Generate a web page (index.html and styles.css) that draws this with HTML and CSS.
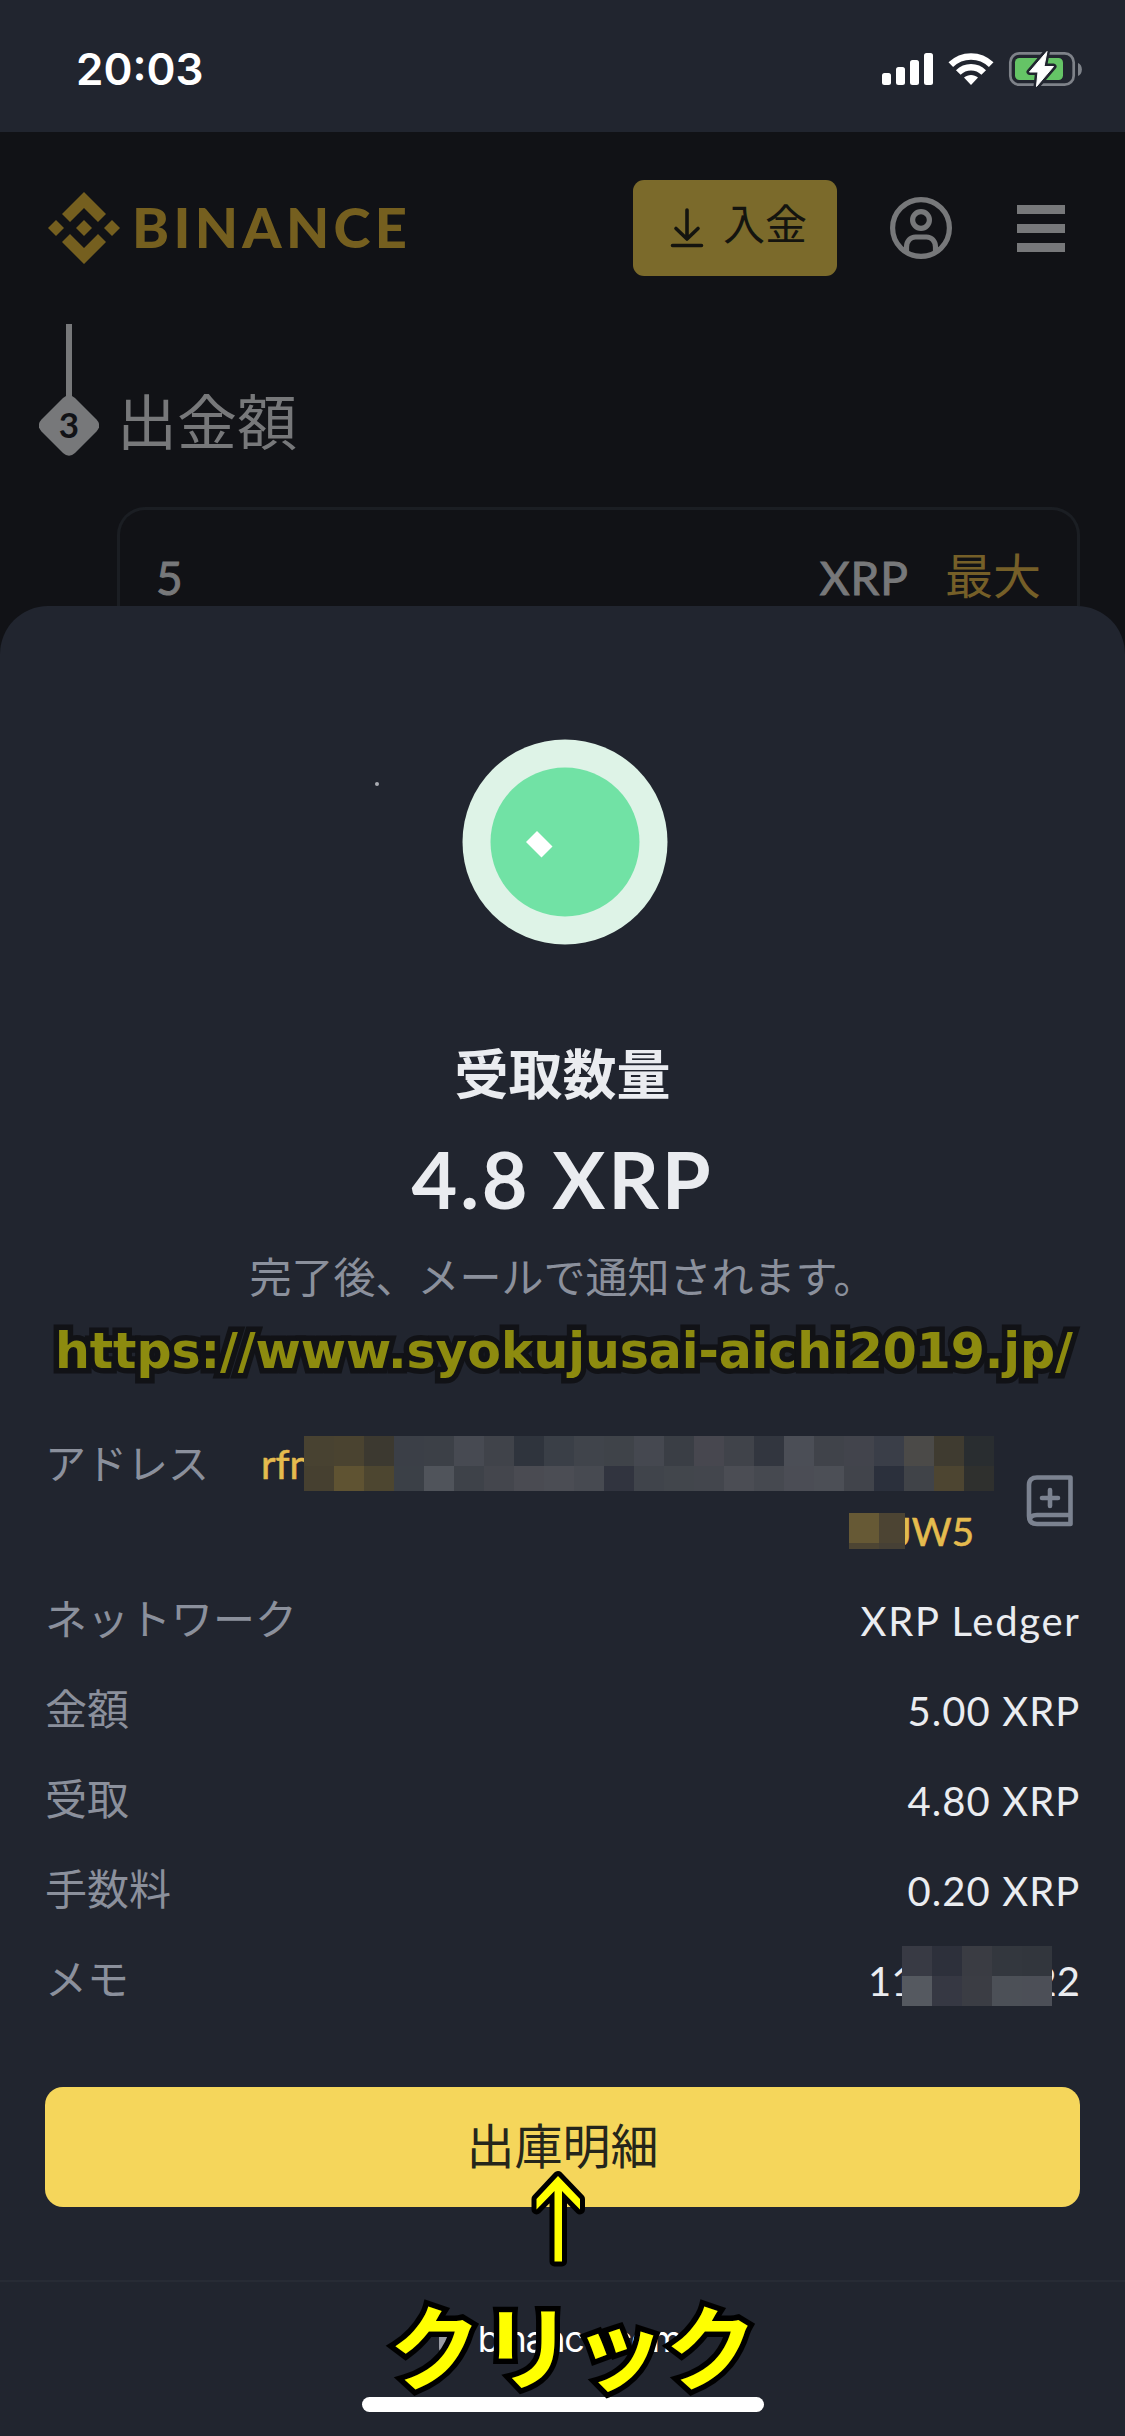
FILE: index.html
```html
<!DOCTYPE html>
<html lang="ja">
<head>
<meta charset="utf-8">
<title>出金</title>
<link rel="stylesheet" href="styles.css">
</head>
<body>
<div class="status">
  <span class="clock">20:03</span>
  <svg class="status-icons" width="202" height="36" viewBox="881 51 202 36">
    <g fill="#fff">
      <rect x="882" y="73" width="9" height="12" rx="2.5"/><rect x="896" y="67" width="9" height="18" rx="2.5"/><rect x="910" y="60" width="9" height="25" rx="2.5"/><rect x="924" y="53" width="9" height="32" rx="2.5"/>
      <path d="M971 85l-7-7.4c4-3.6 10-3.6 14 0z"/>
    </g>
    <path d="M958.3 72.5a18 18 0 0 1 25.4 0M950.8 64.7a29 29 0 0 1 40.4 0" fill="none" stroke="#fff" stroke-width="6.6"/>
    <rect x="1010.3" y="53.3" width="63.400" height="31.400" rx="9" fill="none" stroke="#7e8289" stroke-width="2.700"/>
    <path d="M1078 63c5.200 2 5.200 11 0 13z" fill="#7e8289"/>
    <rect x="1015" y="58" width="48" height="22" rx="4.500" fill="#65c466"/>
    <path d="M1047 51.500L1029.500 72h8.500l-1.500 14.500L1053.500 66.500h-9.500z" fill="#fff" stroke="#21252f" stroke-width="6" stroke-linejoin="round"/>
    <path d="M1047 51.500L1029.500 72h8.500l-1.500 14.500L1053.500 66.500h-9.500z" fill="#fff" stroke="#fff" stroke-width="1" stroke-linejoin="round"/>
  </svg>
</div>

<div class="page">
  <header class="topbar">
    <div class="brand">
      <svg width="72" height="72" viewBox="0 0 72 72" fill="#755f1f">
        <path d="M36 0l22 22-8 8-14-14-14 14-8-8zM36 72l22-22-8-8-14 14-14-14-8 8zM8 28l8 8-8 8-8-8zM64 28l8 8-8 8-8-8zM36 28l8 8-8 8-8-8z"/>
      </svg>
      <span class="brand-name">BINANCE</span>
    </div>
    <div class="deposit">
      <svg width="34" height="40" viewBox="0 0 34 40" fill="none" stroke="#14140f" stroke-width="3.600" stroke-linecap="round" stroke-linejoin="round"><path d="M17 2v28M6 20.500L17 31l11-10.500M2.500 37.500h29"/></svg>
      <span>入金</span>
    </div>
    <svg class="user" width="62" height="62" viewBox="0 0 62 62" fill="none" stroke="#77787a" stroke-width="5.200">
      <circle cx="31" cy="31" r="28.400"/><circle cx="31" cy="23" r="8.400"/><path d="M16.500 54v-4c0-6 4-10 9-10h11c5 0 9 4 9 10v4"/>
    </svg>
    <div class="menu"><i></i><i></i><i></i></div>
  </header>
  <section class="step">
    <div class="rail">
      <div class="rail-line"></div>
      <svg width="60" height="61" viewBox="0 0 60 61" fill="#77787a"><path d="M24 3q6-5.500 12 0l21.500 21.500q5.500 6 0 12L36 58q-6 5.500-12 0L2.500 36.500q-5.500-6 0-12z"/><text x="30" y="43" text-anchor="middle" class="step-no">3</text></svg>
    </div>
    <h2>出金額</h2>
  </section>
  <div class="amount">
    <span class="amount-value">5</span>
    <span class="amount-unit">XRP</span>
    <span class="amount-max">最大</span>
  </div>
</div>

<main class="sheet">
  <svg class="result" width="300" height="210" viewBox="368 737 300 210">
    <circle cx="377" cy="784" r="2" fill="#a9acb2"/>
    <circle cx="565" cy="842" r="102.500" fill="#def3e7"/><circle cx="565" cy="842" r="74.500" fill="#71e2a5"/>
    <path d="M526 842l11-11 15.500 15.500-11 11z" fill="#fff"/>
  </svg>
  <h1>受取数量</h1>
  <p class="total">4.8 XRP</p>
  <p class="note">完了後、メールで通知されます。</p>

  <div class="details">
    <div class="row address">
      <span class="label">アドレス</span>
      <div class="addr">
        <div class="addr-line first"><span class="gold">rfn</span><svg width="690" height="55" viewBox="0 0 690 55" shape-rendering="crispEdges">
          <g id="m1"></g>
        </svg></div>
        <div class="addr-line second"><svg width="56" height="36" shape-rendering="crispEdges"><path fill="#665935" d="M0 0h30v30H0z"/><path fill="#4c4433" d="M30 0h26v30H30z"/><path fill="#4d4533" d="M0 30h30v6H0z"/><path fill="#464035" d="M30 30h26v6H30z"/></svg><span class="gold">JW5</span></div>
      </div>
      <svg class="book" width="48" height="52" viewBox="0 0 48 52" fill="none" stroke="#7b8290" stroke-width="4.600" stroke-linejoin="round" stroke-linecap="round">
        <path d="M44.500 2.500H11Q3 2.500 3 10v31q0 8 8 8h33.500zM44.500 40H11q-7 0-7 5M24 15v16M16 23h16"/>
      </svg>
    </div>
    <div class="row"><span class="label">ネットワーク</span><span class="value net">XRP Ledger</span></div>
    <div class="row"><span class="label">金額</span><span class="value">5.00 XRP</span></div>
    <div class="row"><span class="label">受取</span><span class="value">4.80 XRP</span></div>
    <div class="row"><span class="label">手数料</span><span class="value">0.20 XRP</span></div>
    <div class="row"><span class="label">メモ</span><span class="value memo"><span>11</span><svg width="150" height="60" shape-rendering="crispEdges"><g id="m2"></g></svg><span class="tail"><span>22</span></span></span></div>
  </div>
  <div class="cta">出庫明細</div>
</main>

<footer class="browser">
  <div class="site"><svg width="26" height="34" viewBox="0 0 26 34"><rect y="14" width="26" height="20" rx="4" fill="#9a9ca4"/><path d="M6 16V9a7 7 0 0 1 14 0v7" fill="none" stroke="#9a9ca4" stroke-width="3.500"/></svg><span>binance.com</span></div>
  <div class="home"></div>
</footer>

<div class="url-mark">https://www.syokujusai-aichi2019.jp/</div>
<svg class="arrow" width="56" height="98" viewBox="530 2169 56 98"><path d="M558 2176l22 23v10.500l-18-18.500v70.500h-7.500V2191l-18 18.500V2199z" fill="#ff0" stroke="#000" stroke-width="10" stroke-linejoin="round" paint-order="stroke"/></svg>
<div class="click-mark">クリック</div>
<script src="mosaic.js"></script>
</body>
</html>
```
FILE: mosaic.js
```js
// Pixelated privacy blocks: rows of [y, height, colours], each cell 30px wide.
function mosaic(id, rows) {
  document.getElementById(id).innerHTML = rows.map(function (r) {
    return r[2].split(' ').map(function (c, i) {
      return '<rect x="' + i * 30 + '" y="' + r[0] + '" width="30" height="' + r[1] + '" fill="#' + c + '"/>';
    }).join('');
  }).join('');
}
mosaic('m1', [
  [0, 30, '484231 4a4330 3c3930 3b3f47 3c4047 474a52 40434a 2f343d 3a3f47 40444b 3f4349 454850 3a3e45 47474f 40434a 32363f 4b4e56 40434a 42444c 3a3e48 4b4a48 3f3b30 292d30'],
  [30, 25, '464030 5f5332 4d4630 3b4047 50545b 3e4249 44464d 4a4b52 4b4d54 474a51 31343f 40444b 42464c 43464d 4b4d54 464950 4b4d55 4c4f56 41444b 2b303c 404348 4d4531 2f302e']
]);
mosaic('m2', [
  [0, 30, '383a44 2d303b 3a3c43 33373e 32363d'],
  [30, 30, '555960 363843 3b3d44 4c5057 4c4f57']
]);
```
FILE: styles.css
```css
* { box-sizing: border-box; margin: 0; padding: 0; }
body {
  position: relative; width: 1125px; height: 2436px; overflow: hidden;
  background: #111216; color: #eaecf0;
  font-family: Lato, "Noto Sans CJK JP", sans-serif;
  display: flex; flex-direction: column;
}
svg { display: block; flex: none; }

.status { height: 132px; background: #21252f; display: flex; justify-content: space-between; padding: 0 42px 0 76px; }
.clock { font: 600 44px/54px Inter, sans-serif; margin-top: 42px; color: #fff; }
.status-icons { margin-top: 51px; }

.page { height: 474px; display: flex; flex-direction: column; }
.topbar { height: 192px; padding: 0 60px 0 48px; display: flex; align-items: center; flex: none; }
.brand { display: flex; align-items: center; gap: 12px; flex: 1; color: #755f1f; }
.brand-name { font: 900 56px/60px Lato, sans-serif; letter-spacing: 4.300px; margin-top: -2px; }
.deposit { width: 204px; height: 96px; border-radius: 11px; background: #7b6a2b; color: #14140f; display: flex; align-items: center; padding-left: 37px; gap: 19px; font: 400 42px/60px "Noto Sans CJK JP", sans-serif; margin-right: 53px; }
.deposit span { margin-top: -12px; }
.user { margin-right: 65px; }
.menu { width: 48px; display: flex; flex-direction: column; gap: 10px; }
.menu i { height: 9px; background: #77787a; }

.step { height: 183px; display: flex; gap: 18px; padding-left: 39px; flex: none; }
.rail { width: 60px; display: flex; flex-direction: column; align-items: center; }
.rail-line { width: 6px; height: 73px; background: #77787a; margin-bottom: -2px; }
.step-no { font: 700 35px Lato, sans-serif; fill: #111216; }
.step h2 { font: 400 60px/80px "Noto Sans CJK JP", sans-serif; color: #77787a; margin-top: 55px; }

.amount { margin: 0 45px 0 117px; width: 963px; height: 99px; border: 3px solid #1b1e23; border-bottom: 0; border-radius: 28px 28px 0 0; display: flex; align-items: flex-start; padding: 43px 36px 0 36px; color: #77787a; flex: none; font-size: 46px; line-height: 50px; -webkit-text-stroke: 1px #77787a; }
.amount-value { flex: 1; }
.amount-unit { margin-right: 36px; letter-spacing: 1px; }
.amount-max { font: 400 48px/50px "Noto Sans CJK JP", sans-serif; color: #755f28; margin-top: -5px; -webkit-text-stroke: 0; }

.sheet { height: 1674px; flex: none; background: #21252f; border-radius: 48px 48px 0 0; padding: 131px 45px 0; display: flex; flex-direction: column; align-items: center; }
.result { align-self: flex-start; margin-left: 323px; }
h1 { font: 700 54px/80px "Noto Sans CJK JP", sans-serif; margin-top: 85px; }
.total { font: 700 79px/100px Lato, sans-serif; margin-top: 17px; letter-spacing: 2.800px; }
.note { font: 400 42px/60px "Noto Sans CJK JP", sans-serif; color: #8b909c; margin-top: 16px; }

.details { width: 1035px; margin-top: 128px; display: flex; flex-direction: column; }
.row { height: 90px; display: flex; justify-content: space-between; }
.row.address { height: 154px; justify-content: flex-start; }
.label { font: 400 42px/60px "Noto Sans CJK JP", sans-serif; color: #8b909c; }
.value { font-size: 40px; line-height: 68px; letter-spacing: 1.100px; margin-right: -0.500px; }
.value.net { letter-spacing: 1.700px; }
.address .label { width: 216px; font-size: 41px; margin-top: -2px; }
.addr { width: 733px; display: flex; flex-direction: column; gap: 20px; margin-top: 3px; }
.addr-line { display: flex; height: 57px; }
.addr-line svg { position: relative; z-index: 1; }
.second { justify-content: flex-end; padding-right: 20px; }
.gold { color: #e5bb4e; font-size: 40px; line-height: 56px; width: 43px; -webkit-text-stroke: 0.600px #e5bb4e; }
.second .gold { width: 69px; display: flex; justify-content: flex-end; font-size: 38.500px; line-height: 36px; }
.book { margin: 42px 0 0 32px; }
.memo { display: flex; letter-spacing: 0; margin-right: 0; }
.memo > svg { position: relative; z-index: 1; margin-top: -1px; }
.memo > span { width: 34px; }
.memo .tail { width: 28px; display: flex; justify-content: flex-end; }

.cta { width: 1035px; height: 120px; margin-top: 50px; border-radius: 18px; background: #f5d65b; color: #25261b; font: 400 48px/112px "Noto Sans CJK JP", sans-serif; text-align: center; flex: none; }

.browser { height: 156px; flex: none; background: #21252f; border-top: 2px solid #272b35; display: flex; flex-direction: column; align-items: center; }
.site { display: flex; gap: 13px; height: 115px; padding: 32px 5px 0 0; color: #fff; font: 400 36px/50px Inter, sans-serif; letter-spacing: -1.400px; }
.site svg { margin-top: 4px; }
.home { width: 402px; height: 15px; border-radius: 8px; background: #fff; }

.url-mark { position: absolute; left: 55px; top: 1322px; white-space: nowrap; font: 700 49px/60px "DejaVu Sans", sans-serif; letter-spacing: -0.100px; color: #8d8b0f; -webkit-text-stroke: 11px #111216; paint-order: stroke fill; }
.arrow { position: absolute; left: 530px; top: 2169px; }
.click-mark { position: absolute; left: 389px; top: 2283px; white-space: nowrap; font: 700 92px/120px "Noto Sans CJK JP", sans-serif; color: #ff0; -webkit-text-stroke: 11px #000; paint-order: stroke fill; }
```
